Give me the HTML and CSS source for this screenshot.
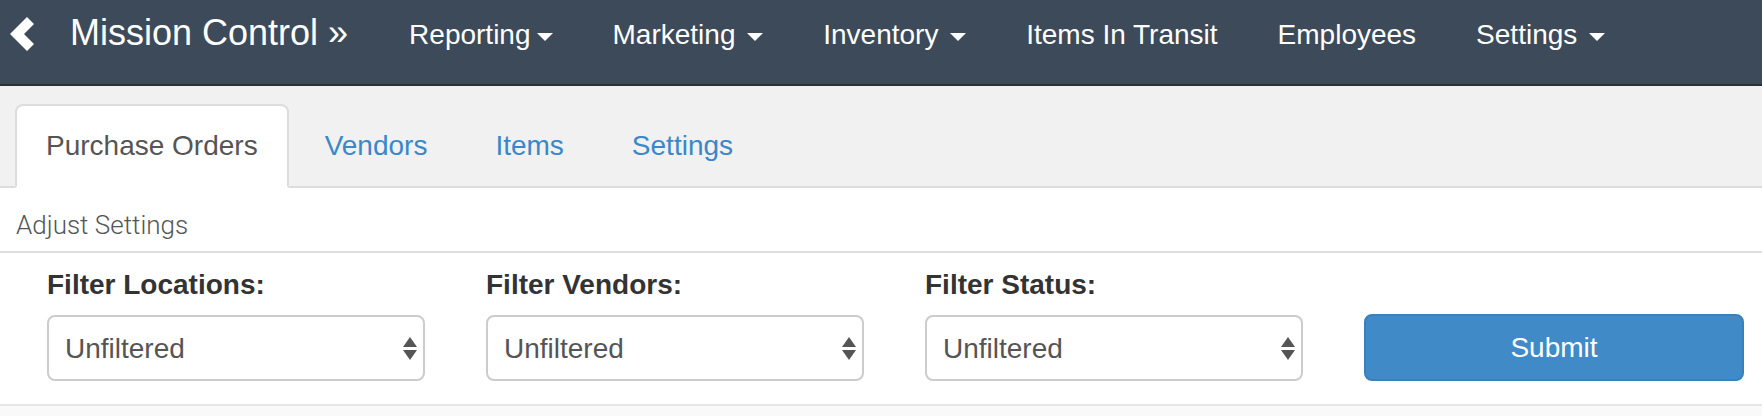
FILE: index.html
```html
<!DOCTYPE html>
<html lang="en">
<head>
<meta charset="utf-8">
<title>Mission Control – Purchase Orders</title>
<link rel="stylesheet" href="styles.css">
</head>
<body>
<header class="navbar">
  <a class="back" href="#" aria-label="Back">
    <svg viewBox="0 0 24 34" width="24" height="34" aria-hidden="true">
      <polygon points="0,17 17,0 24,7 14,17 24,27 17,34" fill="#fff"/>
    </svg>
  </a>
  <a class="brand" href="#">Mission Control »</a>
  <ul class="nav">
    <li><a href="#" class="tight">Reporting<span class="caret"></span></a></li>
    <li><a href="#">Marketing <span class="caret"></span></a></li>
    <li><a href="#">Inventory <span class="caret"></span></a></li>
    <li><a href="#">Items In Transit</a></li>
    <li><a href="#">Employees</a></li>
    <li><a href="#">Settings <span class="caret"></span></a></li>
  </ul>
</header>
<main class="content">
  <ul class="tabs">
    <li class="active"><a href="#">Purchase Orders</a></li>
    <li><a href="#">Vendors</a></li>
    <li><a href="#">Items</a></li>
    <li><a href="#">Settings</a></li>
  </ul>
  <section class="panel">
    <div class="panel-heading">Adjust Settings</div>
    <form class="filters">
      <div class="field">
        <label for="f-loc">Filter Locations:</label>
        <div class="select-wrap">
          <select id="f-loc"><option>Unfiltered</option></select>
          <svg class="arrows" viewBox="0 0 14 23" width="14" height="23" aria-hidden="true"><polygon points="7,0 14,10 0,10"/><polygon points="0,13 14,13 7,23"/></svg>
        </div>
      </div>
      <div class="field">
        <label for="f-ven">Filter Vendors:</label>
        <div class="select-wrap">
          <select id="f-ven"><option>Unfiltered</option></select>
          <svg class="arrows" viewBox="0 0 14 23" width="14" height="23" aria-hidden="true"><polygon points="7,0 14,10 0,10"/><polygon points="0,13 14,13 7,23"/></svg>
        </div>
      </div>
      <div class="field">
        <label for="f-sta">Filter Status:</label>
        <div class="select-wrap">
          <select id="f-sta"><option>Unfiltered</option></select>
          <svg class="arrows" viewBox="0 0 14 23" width="14" height="23" aria-hidden="true"><polygon points="7,0 14,10 0,10"/><polygon points="0,13 14,13 7,23"/></svg>
        </div>
      </div>
      <div class="field submit-field">
        <button type="submit" class="btn-primary">Submit</button>
      </div>
    </form>
  </section>
  <div class="footer-strip"></div>
</main>
</body>
</html>
```
FILE: styles.css
```css
* { box-sizing: border-box; }
html, body { margin: 0; padding: 0; }
body {
  font-family: "Liberation Sans", Arial, sans-serif;
  background: #f9f9f9;
  color: #333;
}
a { text-decoration: none; }
ul { list-style: none; margin: 0; padding: 0; }

/* Navbar */
.navbar {
  display: flex;
  align-items: flex-start;
  height: 86px;
  background: #3d4a59;
  border-bottom: 2px solid #2c3036;
}
.back {
  display: block;
  margin: 17px 0 0 10px;
  width: 24px;
  height: 34px;
}
.back svg { display: block; }
.brand {
  margin-left: 36px;
  padding-top: 13px;
  font-size: 36px;
  line-height: 40px;
  color: #fff;
  padding-right: 31px;
}
.nav { display: flex; }
.nav a {
  display: block;
  padding: 15px 30px;
  font-size: 28px;
  line-height: 40px;
  color: #fff;
  white-space: nowrap;
}
.caret {
  display: inline-block;
  width: 0;
  height: 0;
  margin-left: 4px;
  vertical-align: middle;
  border-top: 8px solid #fff;
  border-left: 8px solid transparent;
  border-right: 8px solid transparent;
}
.nav .tight .caret { margin-left: 6px; }

/* Content */
.content {
  background: #f1f1f1;
  padding-top: 18px;
}
.tabs {
  display: flex;
  gap: 4px;
  padding-left: 15px;
  border-bottom: 2px solid #ddd;
}
.tabs a {
  display: block;
  margin-bottom: -2px;
  padding: 20px 30px;
  font-size: 28px;
  line-height: 40px;
  color: #3a88c9;
  border: 2px solid transparent;
  border-radius: 8px 8px 0 0;
}
.tabs .active a {
  padding: 20px 29px;
  color: #555;
  background: #fff;
  border-color: #ddd #ddd transparent;
}

.panel { background: #fff; }
.panel-heading {
  display: flex;
  align-items: center;
  height: 65px;
  padding: 10px 16px 0;
  font-family: Roboto, "Liberation Sans", sans-serif;
  font-weight: 300;
  font-size: 26px;
  color: #555;
  border-bottom: 2px solid #ddd;
}

.filters {
  display: grid;
  grid-template-columns: 378px 378px 378px 380px;
  column-gap: 61px;
  align-items: end;
  padding: 12px 0 23px 47px;
  border-bottom: 2px solid #e5e5e5;
}
.field label {
  display: block;
  font-weight: bold;
  font-size: 28px;
  line-height: 40px;
  color: #333;
  margin-bottom: 10px;
}
.select-wrap { position: relative; }
.select-wrap select {
  display: block;
  width: 100%;
  height: 66px;
  margin: 0;
  padding: 0 40px 0 16px;
  font-family: "Liberation Sans", Arial, sans-serif;
  font-size: 28px;
  color: #555;
  background: #fff;
  border: 2px solid #ccc;
  border-radius: 8px;
  appearance: none;
  -webkit-appearance: none;
  outline: none;
}
.arrows {
  position: absolute;
  right: 8px;
  top: 22px;
  fill: #555;
  pointer-events: none;
}
.btn-primary {
  display: block;
  width: 100%;
  height: 67px;
  margin: 0;
  font-family: "Liberation Sans", Arial, sans-serif;
  font-size: 28px;
  color: #fff;
  background: #3f8ac7;
  border: 2px solid #3a80bb;
  border-radius: 8px;
  cursor: pointer;
}
.footer-strip {
  height: 10px;
  background: #f9f9f9;
}
```
